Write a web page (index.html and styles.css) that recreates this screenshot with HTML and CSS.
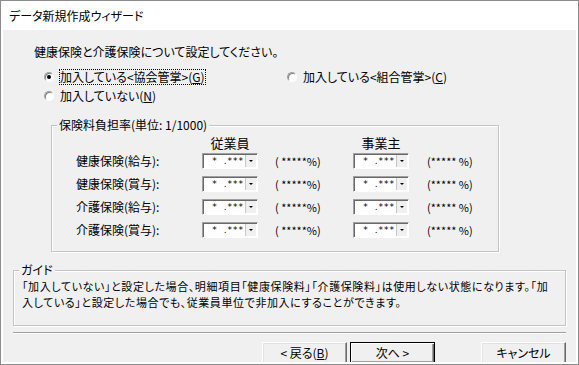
FILE: index.html
```html
<!DOCTYPE html>
<html lang="ja">
<head>
    <meta charset="UTF-8">
    <title>データ新規作成ウィザード</title>
    <link rel="stylesheet" href="styles.css">
</head>
<body>
    <div class="window">
        <div class="titlebar">データ新規作成ウィザード</div>
        <div class="client">
            <p class="lead">健康保険と介護保険について設定してください。</p>

            <div class="radios">
                <label class="radio checked"><span class="dot"></span><span class="focus">加入している&lt;協会管掌&gt;(<u>G</u>)</span></label>
                <label class="radio"><span class="dot"></span><span>加入している&lt;組合管掌&gt;(<u>C</u>)</span></label>
                <label class="radio"><span class="dot"></span><span>加入していない(<u>N</u>)</span></label>
            </div>

            <fieldset class="group rates">
                <legend>保険料負担率(単位: 1/1000)</legend>
                <div class="rate-body">
                    <div class="rate-head">
                        <span></span>
                        <span class="col-title">従業員</span>
                        <span></span>
                        <span class="col-title">事業主</span>
                        <span></span>
                    </div>
                    <div class="rate-grid">
                        <span>健康保険(給与):</span>
                        <span class="combo"><span class="value">* .***</span><span class="arrow"></span></span>
                        <span class="pct">( *****%)</span>
                        <span class="combo"><span class="value">* .***</span><span class="arrow"></span></span>
                        <span class="pct pct-er">(***** %)</span>

                        <span>健康保険(賞与):</span>
                        <span class="combo"><span class="value">* .***</span><span class="arrow"></span></span>
                        <span class="pct">( *****%)</span>
                        <span class="combo"><span class="value">* .***</span><span class="arrow"></span></span>
                        <span class="pct pct-er">(***** %)</span>

                        <span>介護保険(給与):</span>
                        <span class="combo"><span class="value">* .***</span><span class="arrow"></span></span>
                        <span class="pct">( *****%)</span>
                        <span class="combo"><span class="value">* .***</span><span class="arrow"></span></span>
                        <span class="pct pct-er">(***** %)</span>

                        <span>介護保険(賞与):</span>
                        <span class="combo"><span class="value">* .***</span><span class="arrow"></span></span>
                        <span class="pct">( *****%)</span>
                        <span class="combo"><span class="value">* .***</span><span class="arrow"></span></span>
                        <span class="pct pct-er">(***** %)</span>
                    </div>
                </div>
            </fieldset>

            <fieldset class="group guide">
                <legend>ガイド</legend>
                <p class="guide-text">「加入していない」と設定した場合、明細項目「健康保険料」「介護保険料」は使用しない状態になります。「加<br>入している」と設定した場合でも、従業員単位で非加入にすることができます。</p>
            </fieldset>

            <div class="sep"></div>

            <div class="buttons">
                <button class="btn">&lt; 戻る(<u>B</u>)</button>
                <button class="btn btn-default">次へ &gt;</button>
                <button class="btn btn-cancel">キャンセル</button>
            </div>
        </div>
    </div>
</body>
</html>
```

FILE: styles.css
```css
body {
    margin: 0;
    font-family: "Noto Sans CJK JP", "Noto Sans", sans-serif;
    font-size: 12px;
    color: #000;
    font-feature-settings: "palt";
}

.window {
    width: 579px;
    height: 365px;
    box-sizing: border-box;
    border: 1px solid #8c8c8c;
    background: #fff;
    padding: 0 2px 2px;
    display: flex;
    flex-direction: column;
}

.titlebar {
    height: 29px;
    line-height: 29px;
    padding-left: 6px;
    flex: none;
}

.client {
    flex: 1;
    background: #f0f0f0;
    overflow: hidden;
    padding-top: 15px;
}

.lead {
    margin: 0 0 11px 31px;
    line-height: 14px;
}

/* radio buttons */
.radios {
    display: grid;
    grid-template-columns: 243px auto;
    row-gap: 5px;
    padding-left: 41px;
    line-height: 14px;
}

.radio {
    display: flex;
    align-items: center;
    gap: 6px;
}

.dot {
    width: 10px;
    height: 10px;
    box-sizing: border-box;
    border-radius: 50%;
    border: 1px solid;
    border-color: #a0a0a0 #fff #fff #a0a0a0;
    box-shadow: inset 1px 1px 0 #808080;
    background: #fff;
    display: flex;
    align-items: center;
    justify-content: center;
}

.radio.checked .dot::after {
    content: "";
    width: 4px;
    height: 4px;
    border-radius: 50%;
    background: #000;
}

.focus {
    outline: 1px dotted #000;
}

/* group boxes */
.group {
    margin: 0;
    padding: 0;
    min-width: 0;
    border: 1px solid #c4c4c4;
    box-shadow: 1px 1px 0 #fff, inset 1px 1px 0 #fff;
}

.group legend {
    margin-left: 5px;
    padding: 0 2px;
    line-height: 14px;
    background: #f0f0f0;
}

.rates {
    margin: 15px 0 0 48px;
    width: 448px;
    box-sizing: border-box;
}

.rate-body {
    padding: 4px 0 13px 24px;
}

.rate-head,
.rate-grid {
    display: grid;
    grid-template-columns: 126px 56px 95px 56px auto;
}

.rate-head {
    line-height: 14px;
    font-size: 13px;
}

.col-title {
    text-align: center;
}

.rate-grid {
    margin-top: 3px;
    row-gap: 7px;
    grid-auto-rows: 16px;
    align-items: center;
    line-height: 14px;
}

.pct {
    padding-left: 17px;
    font-size: 11px;
}

.pct-er {
    padding-left: 18px;
}

.combo {
    display: flex;
    height: 16px;
    box-sizing: border-box;
    border: 1px solid;
    border-color: #a0a0a0 #fff #fff #a0a0a0;
    box-shadow: inset 1px 1px 0 #696969;
    background: #fff;
}

.value {
    flex: 1;
    text-align: right;
    padding-right: 1px;
    font-family: "DejaVu Sans", sans-serif;
    font-size: 9px;
    letter-spacing: 1px;
    word-spacing: 2px;
    line-height: 14px;
}

.arrow {
    width: 10px;
    margin: 1px 1px 1px 0;
    background: #f0f0f0;
    border-left: 1px solid #c8c8c8;
    display: flex;
    align-items: center;
    justify-content: center;
}

.arrow::after {
    content: "";
    border-left: 2px solid transparent;
    border-right: 2px solid transparent;
    border-top: 2px solid #000;
}

.guide {
    margin: 11px 10px 0;
}

.guide-text {
    margin: 0;
    padding: 1px 8px 15px;
    font-size: 11px;
    letter-spacing: 0.6px;
    line-height: 16px;
    white-space: nowrap;
}

.sep {
    margin: 6px 10px 0;
    border-top: 1px solid #a0a0a0;
    border-bottom: 1px solid #fff;
}

/* buttons */
.buttons {
    display: flex;
    justify-content: flex-end;
    gap: 3px;
    padding: 8px 10px 0;
}

.btn {
    width: 85px;
    height: 22px;
    box-sizing: border-box;
    padding: 0;
    font: inherit;
    color: #000;
    line-height: 18px;
    background: #f0f0f0;
    border: 1px solid;
    border-color: #fff #696969 #696969 #fff;
    box-shadow: inset -1px -1px 0 #a0a0a0, inset 1px 1px 0 #e3e3e3;
}

.btn-default {
    border-color: #000;
    box-shadow: inset 1px 1px 0 #fff, inset -1px -1px 0 #696969, inset -2px -2px 0 #a0a0a0;
}

.btn-cancel {
    margin-left: 43px;
}
```
